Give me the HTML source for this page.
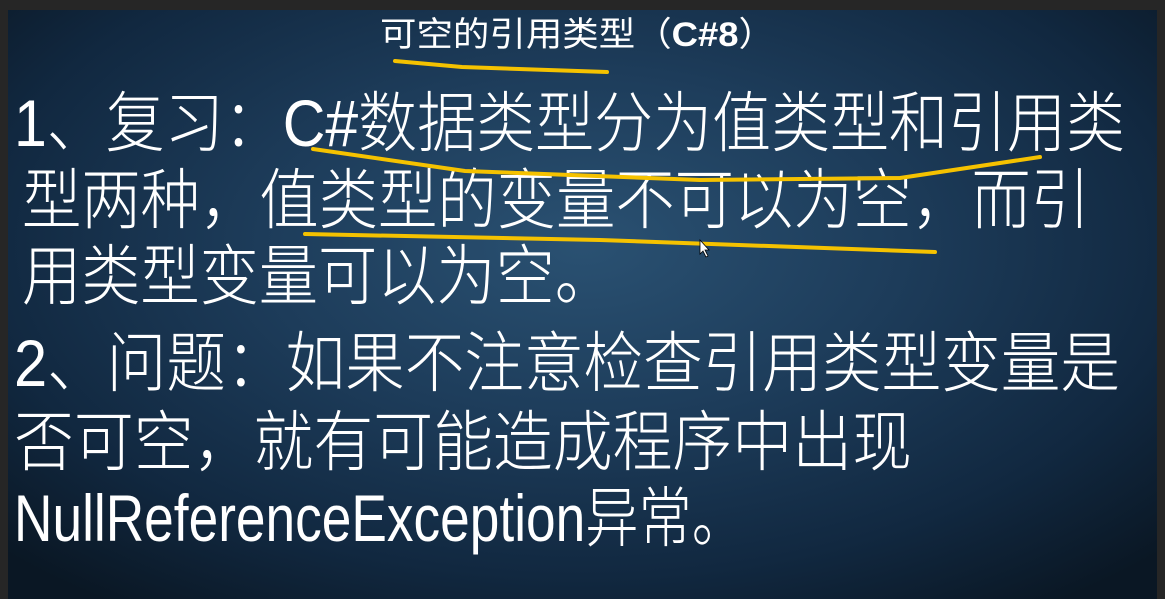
<!DOCTYPE html>
<html><head><meta charset="utf-8"><style>
html,body{margin:0;padding:0;background:#262626;width:1165px;height:599px;overflow:hidden}
.slide{position:absolute;left:8px;top:10px;width:1149px;height:589px;
background:radial-gradient(ellipse 70% 75% at 50% 40%,#2a5172 0%,#1d3c5a 40%,#112840 75%,#0a1724 100%);}
svg{position:absolute;left:0;top:0}
text{font-family:"Liberation Sans","Noto Sans CJK SC",sans-serif;fill:#fff}
.b text{font-weight:300}
</style></head><body>
<div class="slide"></div>
<svg width="1165" height="599" viewBox="0 0 1165 599">
<text x="380" y="46" font-size="34" textLength="395" lengthAdjust="spacingAndGlyphs">可空的引用类型（<tspan font-weight="bold">C#8</tspan>）</text>
<g font-size="66" class="b">
<text x="14" y="146" textLength="1111" lengthAdjust="spacingAndGlyphs">1、复习：C#数据类型分为值类型和引用类</text>
<text x="22" y="223" textLength="1068" lengthAdjust="spacingAndGlyphs">型两种，值类型的变量不可以为空，而引</text>
<text x="22" y="299" textLength="592" lengthAdjust="spacingAndGlyphs">用类型变量可以为空。</text>
<text x="14" y="386" textLength="1106" lengthAdjust="spacingAndGlyphs">2、问题：如果不注意检查引用类型变量是</text>
<text x="14" y="465" textLength="898" lengthAdjust="spacingAndGlyphs">否可空，就有可能造成程序中出现</text>
<text x="14" y="541" textLength="731" lengthAdjust="spacingAndGlyphs">NullReferenceException异常。</text>
</g>
<g fill="none" stroke="#f5c200" stroke-width="4" stroke-linecap="round" stroke-linejoin="round">
<polyline points="395,61 462,67 607,72"/>
<polyline points="313,149 465,171 700,180 900,178 1040,157"/>
<polyline points="305,234 600,240 935,252"/>
</g>
<path d="M700,240 L700,254 L703,251 L706,257 L708,256 L705,250 L709,250 Z" fill="#fff" stroke="#000" stroke-width="0.8"/>
</svg>
</body></html>
